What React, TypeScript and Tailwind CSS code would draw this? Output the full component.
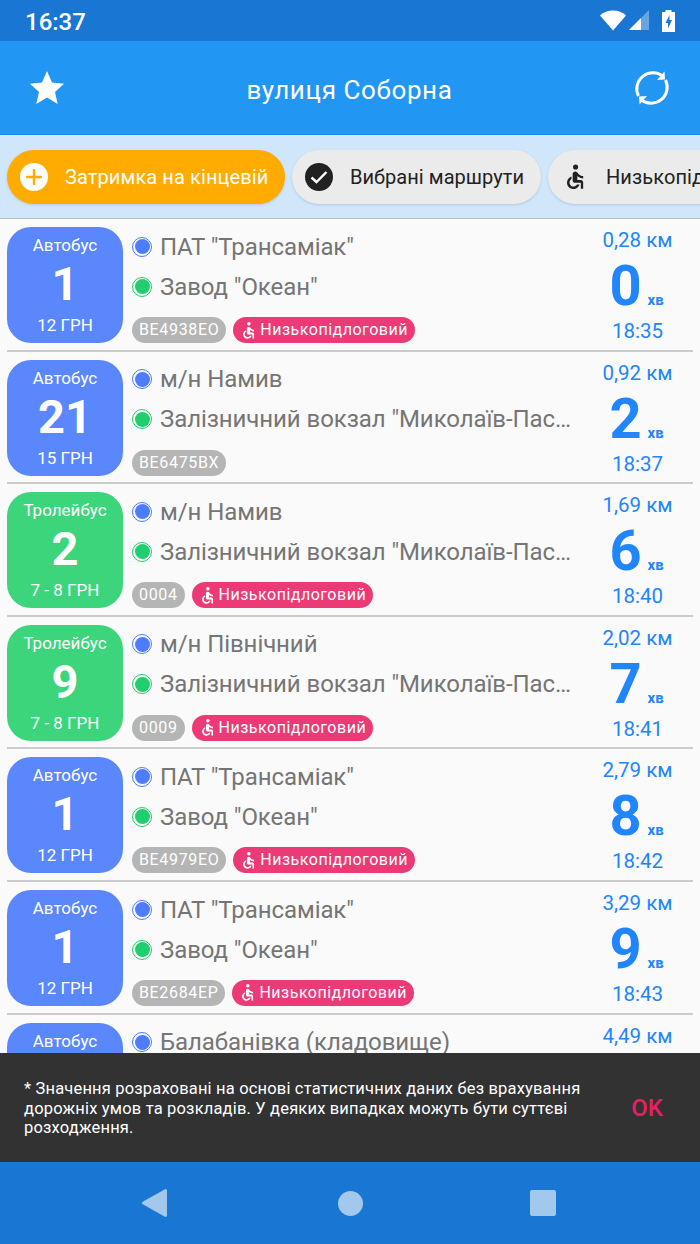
type Route = {
  kind: string
  num?: string
  price?: string
  from: string
  to?: string
  plate?: string
  low?: boolean
  km: string
  min?: string
  time?: string
}

const ROUTES: Route[] = [
  { kind: 'Автобус', num: '1', price: '12 ГРН', from: 'ПАТ "Трансаміак"', to: 'Завод "Океан"', plate: 'ВЕ4938ЕО', low: true, km: '0,28 км', min: '0', time: '18:35' },
  { kind: 'Автобус', num: '21', price: '15 ГРН', from: 'м/н Намив', to: 'Залізничний вокзал "Миколаїв-Пасажирський"', plate: 'ВЕ6475ВХ', km: '0,92 км', min: '2', time: '18:37' },
  { kind: 'Тролейбус', num: '2', price: '7 - 8 ГРН', from: 'м/н Намив', to: 'Залізничний вокзал "Миколаїв-Пасажирський"', plate: '0004', low: true, km: '1,69 км', min: '6', time: '18:40' },
  { kind: 'Тролейбус', num: '9', price: '7 - 8 ГРН', from: 'м/н Північний', to: 'Залізничний вокзал "Миколаїв-Пасажирський"', plate: '0009', low: true, km: '2,02 км', min: '7', time: '18:41' },
  { kind: 'Автобус', num: '1', price: '12 ГРН', from: 'ПАТ "Трансаміак"', to: 'Завод "Океан"', plate: 'ВЕ4979ЕО', low: true, km: '2,79 км', min: '8', time: '18:42' },
  { kind: 'Автобус', num: '1', price: '12 ГРН', from: 'ПАТ "Трансаміак"', to: 'Завод "Океан"', plate: 'ВЕ2684ЕР', low: true, km: '3,29 км', min: '9', time: '18:43' },
  // only the top of this row shows above the snackbar
  { kind: 'Автобус', from: 'Балабанівка (кладовище)', km: '4,49 км' },
]

function Wheelchair({ className }: { className: string }) {
  return (
    <svg viewBox="0 0 24 24" className={className} fill="currentColor">
      <circle cx="12.5" cy="3.4" r="2.2" />
      <path d="M19 13.2v-2c-1.5 0-3-.7-4-1.8l-1.2-1.4c-.4-.4-1-.7-1.6-.7-1.2 0-2.2 1-2.2 2.2V15c0 1.1.9 2 2 2h5v5h2v-5.5c0-1.1-.9-2-2-2h-3v-3.4c1.3 1.1 3.2 2.1 5 2.1z" />
      <path d="M13.8 18.5A3.5 3.5 0 1 1 9 13.7v-2.1a5.5 5.5 0 1 0 6.9 6.900h-2.100z" />
    </svg>
  )
}

function StopLine({ text, tone }: { text: string; tone: 'blue' | 'green' }) {
  return (
    <div className="flex items-center h-[40px]">
      <div className={`w-[20px] h-[20px] rounded-full border flex items-center justify-center shrink-0 ${tone === 'blue' ? 'border-[#4d7cfe]' : 'border-[#21ce6f]'}`}>
        <div className={`w-[15px] h-[15px] rounded-full ${tone === 'blue' ? 'bg-[#4d7cfe]' : 'bg-[#21ce6f]'}`} />
      </div>
      <span className="ml-[8px] w-[418px] truncate text-[24px] tracking-[-0.08px] text-[#757575]">{text}</span>
    </div>
  )
}

function RouteRow({ r }: { r: Route }) {
  const bus = r.kind === 'Автобус'
  return (
    <div className="h-[132.6px] shrink-0 pl-[7px] pr-[7px] pt-[8px] flex flex-col">
      <div className="flex h-[116px]">
        <div className={`w-[116px] h-[116px] rounded-[24px] shrink-0 flex flex-col items-center text-white ${bus ? 'bg-[#5a87fb]' : 'bg-[#3cd57c]'}`}>
          <div className="text-[17px] leading-[20px] mt-[8px]">{r.kind}</div>
          {r.num && <div className="text-[47px] leading-[56px] font-bold mt-[1px]">{r.num}</div>}
          {r.price && <div className="text-[17px] leading-[20px] mt-[3px]">{r.price}</div>}
        </div>
        <div className="ml-[9px] flex-1 min-w-0 flex flex-col">
          <div className="-mt-[0.4px]">
            <StopLine text={r.from} tone="blue" />
            {r.to && <StopLine text={r.to} tone="green" />}
          </div>
          <div className="flex gap-[7px] mt-auto">
            {r.plate && <div className="h-[26px] px-[7px] rounded-[13px] bg-[#b5b5b5] text-white text-[16px] tracking-[0.65px] leading-[26px]">{r.plate}</div>}
            {r.low && (
              <div className="h-[26px] pl-[6px] pr-[7px] rounded-[13px] bg-[#ec3a76] text-white text-[16px] tracking-[0.5px] leading-[26px] flex items-center">
                <Wheelchair className="w-[19px] h-[19px] mr-[2px] shrink-0" />
                Низькопідлоговий
              </div>
            )}
          </div>
        </div>
        <div className="w-[110px] shrink-0 -ml-[110px] flex flex-col items-center text-[#2185fb] relative -left-[0.5px]">
          <div className="text-[20.5px] leading-[24px] mt-[1px] whitespace-nowrap">{r.km}</div>
          {r.min && (
            <div className="flex items-end h-[64px] relative -left-[1px] mt-[2px]">
              <span className="text-[56px] leading-[64px] font-bold">{r.min}</span>
              <span className="text-[15px] leading-[16px] font-bold ml-[6px] mb-[10px]">хв</span>
            </div>
          )}
          {r.time && <div className="text-[20.5px] leading-[24px] mt-[1px]">{r.time}</div>}
        </div>
      </div>
      <div className="mt-auto h-[2px] bg-[#cccccc]" />
    </div>
  )
}

export default function App() {
  return (
    <div className="w-[700px] h-[1244px] overflow-hidden flex flex-col bg-[#fafafa] font-['Roboto',sans-serif]">
      <div className="h-[41px] bg-[#1976d2] flex items-center justify-between pl-[25px] pr-[25px] text-white shrink-0">
        <span className="text-[24px] font-medium relative top-[1px]">16:37</span>
        <div className="flex items-center">
          <svg viewBox="0 0 26 21" className="w-[26px] h-[21px]" fill="white"><path d="M0 5.500C3.500 2 8 .5 13 .5s9.500 1.500 13 5L13 20.500z" /></svg>
          <svg viewBox="0 0 21 21" className="w-[21px] h-[21px] ml-[3px]"><path d="M0 20 20 0v20z" fill="white" fillOpacity="0.35" /><path d="M0 20 12 8v12z" fill="white" /></svg>
          <svg viewBox="0 0 13 22" className="w-[13px] h-[22px] ml-[12px]"><path fillRule="evenodd" fill="white" d="M3.500 0h6v2H13v20H0V2h3.500zM7.500 5 3.500 13H6v5.500L10 10H7.500z" /></svg>
        </div>
      </div>

      <div className="h-[94px] bg-[#2196f3] flex items-center justify-between pl-[30px] pr-[29px] text-white shrink-0 border-b border-[#1f8de6]">
        <svg viewBox="0 0 34 33" className="w-[34px] h-[33px]" fill="white"><path d="M17 0l5 11.500 12 1.200-9 8.200 2.700 12L17 26.600 6.300 32.900 9 20.900 0 12.700l12-1.200z" /></svg>
        <span className="text-[26px] tracking-[0.6px] relative top-[3px] left-[1px]">вулиця Соборна</span>
        <svg viewBox="0 0 38 38" className="w-[38px] h-[38px]" fill="none" stroke="white" strokeWidth="3">
          <path d="M5.500 27A16 16 0 0 1 30 7.500" />
          <path d="M32.500 11A16 16 0 0 1 8 30.500" />
          <path d="M31.500 2.500 32 10.500 24 11z" fill="white" stroke="none" />
          <path d="M6.500 35.500 6 27.500 14 27z" fill="white" stroke="none" />
        </svg>
      </div>

      <div className="h-[84px] bg-[#d0e6fb] border-b border-[#bdbdbd] shrink-0 flex items-center gap-[7px] pl-[7px] overflow-hidden">
        <div className="h-[54px] w-[278px] shrink-0 rounded-full bg-[#ffab00] shadow-sm flex items-center pl-[13px] text-white">
          <div className="w-[28px] h-[28px] rounded-full bg-white flex items-center justify-center">
            <svg viewBox="0 0 16 16" className="w-[16px] h-[16px]"><path d="M8 1v14M1 8h14" stroke="#ffab00" strokeWidth="2.400" strokeLinecap="round" /></svg>
          </div>
          <span className="ml-[17px] text-[20px] tracking-[0.1px] whitespace-nowrap">Затримка на кінцевій</span>
        </div>
        <div className="h-[54px] w-[249px] shrink-0 rounded-full bg-[#ebebeb] shadow-sm flex items-center pl-[13px] text-[#212121]">
          <div className="w-[28px] h-[28px] rounded-full bg-[#212121] flex items-center justify-center">
            <svg viewBox="0 0 18 14" className="w-[18px] h-[14px]" fill="none"><path d="M1.500 7.500 6.500 12 16.500 2" stroke="white" strokeWidth="2.400" /></svg>
          </div>
          <span className="ml-[17px] text-[20px] tracking-[0.05px] whitespace-nowrap">Вибрані маршрути</span>
        </div>
        <div className="h-[54px] w-[220px] shrink-0 rounded-full bg-[#ebebeb] shadow-sm flex items-center pl-[13px] text-[#212121]">
          <Wheelchair className="w-[28px] h-[30px] shrink-0" />
          <span className="ml-[17px] text-[20px] tracking-[0.1px] whitespace-nowrap">Низькопідлоговий</span>
        </div>
      </div>

      <div className="flex-1 min-h-0 overflow-hidden flex flex-col">
        {ROUTES.map((r, i) => <RouteRow key={i} r={r} />)}
      </div>

      <div className="h-[109px] shrink-0 bg-[#323232] flex items-center pl-[24px] pr-[37px]">
        <p className="w-[570px] text-[16.5px] leading-[19.5px] text-white tracking-[0.17px] relative top-[1px]">* Значення розраховані на основі статистичних даних без врахування дорожніх умов та розкладів. У деяких випадках можуть бути суттєві розходження.</p>
        <span className="ml-auto text-[24px] font-medium text-[#e91e63]">OK</span>
      </div>

      <div className="h-[82px] shrink-0 bg-[#1976d2] flex items-center pl-[142px]">
        <svg viewBox="0 0 25 28" className="w-[25px] h-[28px]" fill="#a3c8ee"><path d="M23.500 0A1.500 1.500 0 0 1 25 1.500v25a1.500 1.500 0 0 1-2.500 1L.7 15.200a1.500 1.500 0 0 1 0-2.400L22.500.5z" /></svg>
        <div className="w-[25px] h-[25px] rounded-full bg-[#a3c8ee] ml-[171px]" />
        <div className="w-[26px] h-[26px] rounded-[2px] bg-[#a3c8ee] ml-[167px]" />
      </div>
    </div>
  )
}
